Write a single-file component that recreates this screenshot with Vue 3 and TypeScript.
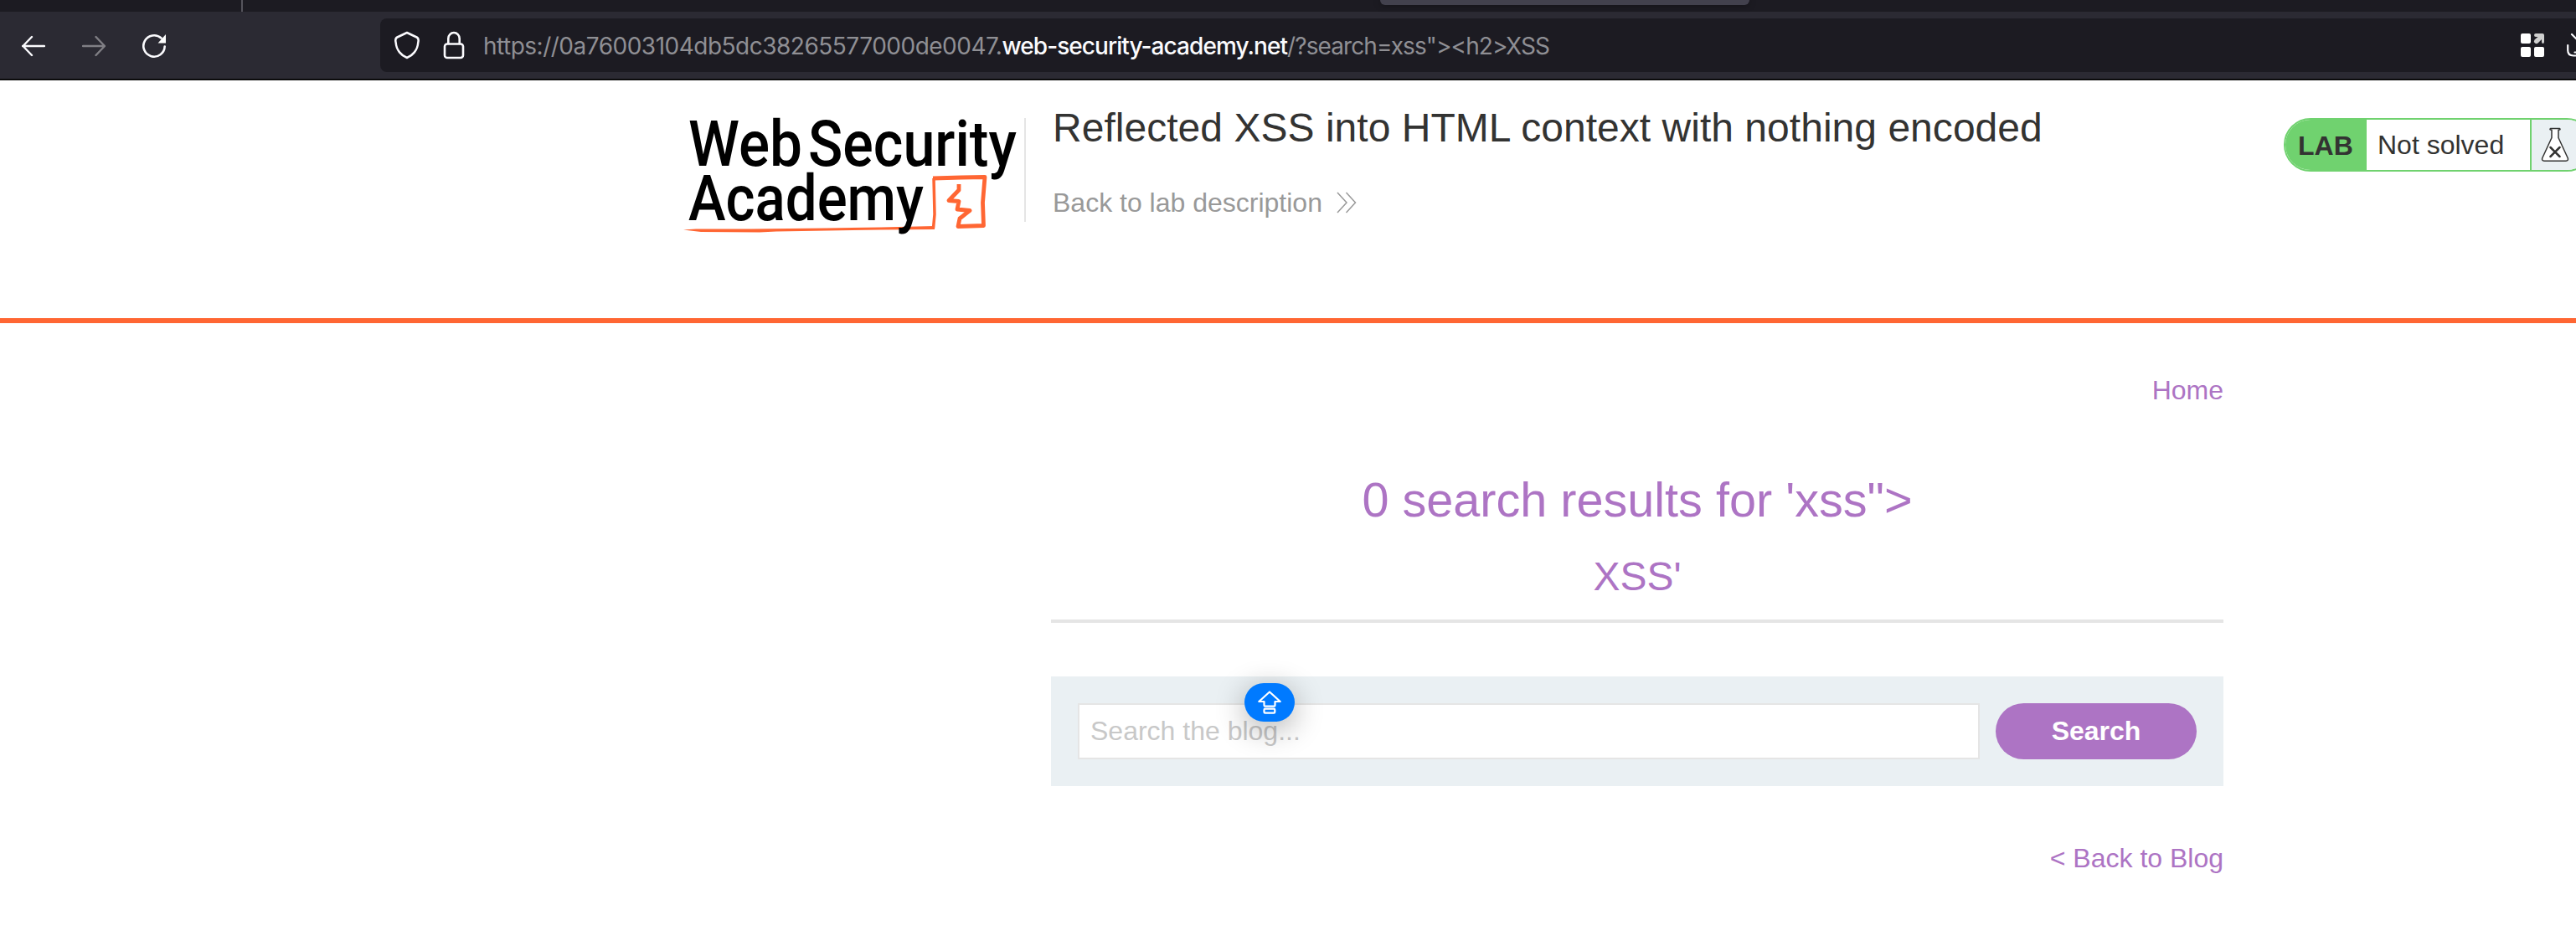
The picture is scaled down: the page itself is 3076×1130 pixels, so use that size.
<script setup lang="ts">
import { ref } from 'vue'

const url = {
  prefix: 'https://0a76003104db5dc38265577000de0047.',
  domain: 'web-security-academy.net',
  path: '/?search=xss"><h2>XSS',
}
const heading = '0 search results for \'xss">'
const subheading = "XSS'"
const query = ref('')
</script>

<template>
  <div class="page">
    <div class="tabs">
      <div class="tab-separator"></div>
      <div class="tab-active"></div>
    </div>
    <div class="toolbar">
      <div class="nav-icons">
        <svg width="28" height="32" viewBox="0 0 28 32" class="stroke">
          <path d="M1 16H27M12 5L1.500 16L12 27" />
        </svg>
        <svg width="28" height="32" viewBox="0 0 28 32" class="stroke dim">
          <path d="M1 16H27M16.500 5L27 16L16.500 27" />
        </svg>
        <svg width="30" height="32" viewBox="0 0 30 32" class="stroke">
          <path d="M26.700 16.500A12.700 12.700 0 1 1 22.500 6.500" stroke-width="2.600" />
          <path d="M28 2V12.500H18.600Z" fill="#fff" stroke="none" />
        </svg>
      </div>
      <div class="address">
        <svg class="stroke shield" width="30" height="34" viewBox="0 0 30 34">
          <path d="M15 2L27 7.500Q30 9 28.700 14C28 23 22 29.500 15 32C8 29.500 2 23 1.300 14Q0 9 3 7.500Z" transform="translate(.4 0) scale(.97 1)" stroke-width="2.600" />
        </svg>
        <svg class="stroke lock" width="26" height="34" viewBox="0 0 26 34">
          <rect x="2" y="15.500" width="22" height="16.500" rx="3" stroke-width="2.600" />
          <path d="M6.300 15V9A6.700 7 0 0 1 19.700 9V15" stroke-width="2.600" />
        </svg>
        <div class="url"><span class="prefix">{{ url.prefix }}</span><b>{{ url.domain }}</b><span class="path">{{ url.path }}</span></div>
        <div class="address-actions">
          <svg width="28" height="28" viewBox="0 0 28 28" fill="#fff">
            <rect width="12" height="12" rx="2" />
            <rect y="16" width="12" height="12" rx="2" />
            <rect x="16" y="16" width="12" height="12" rx="2" />
            <path fill="#cfcfcf" d="M18 0H26Q28 0 28 2V10Q28 12 26.500 12Q25 12 25 10V7L20.500 11.500Q18.500 13 17 11.500Q15 9.500 16.500 7.500L20.500 4H18Q16 4 16 2Q16 0 18 0Z" />
          </svg>
          <svg class="stroke" width="11" height="32" viewBox="0 0 11 32">
            <path d="M6 3L13 10M1.200 16V22Q1.200 28.500 8 28.500H12M9.500 24.500H12" stroke-width="2.200" />
          </svg>
        </div>
      </div>
    </div>

    <header class="lab-header">
      <svg class="logo" width="412" height="150" viewBox="0 0 412 150">
        <g fill="none" stroke="#ff6633" stroke-linejoin="round">
          <path fill="#ff6633" stroke="none" d="M-1 17L14 16L80 16L170 15L235 14L299 12.500L299 16.500L235 17L110 19L90 20L20 19.500Z" transform="translate(0 120.500)" />
          <path stroke-width="3.500" d="M297.500 135.500L299 119L298 76" />
          <path stroke-width="4.800" d="M297 76L331 75L359 74.500L356.500 105L357.500 132.500L327 133.500L329 124L341 114.500L326 113L328 103.500L316 102.500L328 90L328 83" />
        </g>
        <g class="logo-text">
          <text x="5" y="61.300" textLength="136" lengthAdjust="spacingAndGlyphs">Web</text>
          <text x="148" y="61.300" textLength="249" lengthAdjust="spacingAndGlyphs">Security</text>
          <text x="5" y="126.300" textLength="281" lengthAdjust="spacingAndGlyphs">Academy</text>
        </g>
      </svg>
      <div class="title-block">
        <h2>Reflected XSS into HTML context with nothing encoded</h2>
        <a class="back-lab">Back to lab description
          <svg width="24" height="26" viewBox="0 0 24 26" fill="none" stroke="#999" stroke-width="1.500">
            <path d="M1 1L12 13L1 25M11.500 1L22.500 13L11.500 25" />
          </svg>
        </a>
      </div>
      <div class="lab-status">
        <strong>LAB</strong>
        <span>Not solved</span>
        <div class="flask">
          <svg width="34" height="42" viewBox="0 0 34 42" stroke="#333332" fill="none">
            <path fill="#fff" stroke-width="1.500" stroke-linejoin="round" d="M11.500 1.500H22.500Q24 3.300 21 3.300V12.500L32.300 37Q33 40.200 30 40.200H4Q1 40.200 1.700 37L13 12.500V3.300Q10 3.300 11.500 1.500Z" />
            <path stroke-width="2.500" stroke-linecap="round" d="M11.500 24L22.500 35M22.500 24L11.500 35" />
          </svg>
        </div>
      </div>
    </header>

    <main>
      <nav><a>Home</a></nav>
      <section class="blog-header">
        <h1>{{ heading }}</h1>
        <h2>{{ subheading }}</h2>
      </section>
      <form class="search" @submit.prevent>
        <input v-model="query" type="text" placeholder="Search the blog..." />
        <button type="submit">Search</button>
        <div class="caps-badge">
          <svg width="30" height="30" viewBox="0 0 30 30" fill="none" stroke="#fff" stroke-width="2.200" stroke-linejoin="round">
            <path d="M15 2.500L27.700 14H21.500V18.500Q21.500 19.700 20.300 19.700H9.700Q8.500 19.700 8.500 18.500V14H2.300Z" />
            <rect x="8.500" y="22.700" width="12.800" height="5" rx="1.200" />
          </svg>
        </div>
      </form>
      <div class="back-blog"><a>&lt; Back to Blog</a></div>
    </main>
  </div>
</template>

<style>
body {
  background: #fff;
  overflow: hidden;
}
</style>

<style scoped>
* {
  box-sizing: border-box;
}
.page {
  width: 3076px;
  height: 1130px;
  overflow: hidden;
  font-family: "Liberation Sans", Arial, sans-serif;
  font-size: 32px;
  line-height: 36px;
  color: #333332;
}
svg {
  display: block;
  flex: none;
}
.tabs {
  display: flex;
  height: 14px;
  background: #1c1b22;
}
.tab-separator {
  width: 2px;
  margin-left: 288px;
  background: #55545c;
}
.tab-active {
  width: 441px;
  height: 6px;
  margin-left: 1358px;
  border-radius: 0 0 8px 8px;
  background: #42414d;
  box-shadow: 0 0 8px rgba(0, 0, 0, 0.4);
}
.toolbar {
  display: flex;
  align-items: center;
  height: 82px;
  background: #2b2a33;
  border-bottom: 2px solid #0c0c0d;
}
.nav-icons {
  display: flex;
  gap: 44px;
  width: 454px;
  padding: 2px 0 0 26px;
}
.stroke {
  fill: none;
  stroke: #fbfbfe;
  stroke-width: 2.4;
  stroke-linecap: round;
  stroke-linejoin: round;
}
.dim {
  stroke: #807f85;
}
.address {
  display: flex;
  align-items: center;
  flex: 1;
  height: 64px;
  overflow: hidden;
  background: #1c1b22;
  border-radius: 8px 0 0 8px;
}
.shield {
  margin-left: 17px;
}
.lock {
  margin-left: 28px;
}
.url {
  margin-left: 22px;
  padding-top: 2px;
  font-family: Inter, sans-serif;
  font-size: 28px;
  white-space: pre;
  color: #8f8f94;
}
.prefix {
  letter-spacing: -0.5px;
}
.url b {
  font-weight: 500;
  letter-spacing: -0.93px;
  color: #fbfbfe;
}
.path {
  letter-spacing: -0.9px;
}
.address-actions {
  display: flex;
  align-items: center;
  gap: 27px;
  margin-left: auto;
}
.lab-header {
  display: flex;
  align-items: flex-start;
  height: 290px;
  border-bottom: 6px solid #ff6633;
}
.logo {
  height: 150px;
  margin: 41px 0 0 817px;
  overflow: visible;
}
.logo-text {
  font-family: Roboto, sans-serif;
  font-size: 76.5px;
  font-weight: 500;
  fill: #000;
}
.title-block {
  position: relative;
  flex: none;
  width: 1470px;
  padding: 29px 0 0 28px;
}
.title-block::before {
  content: "";
  position: absolute;
  left: -6px;
  top: 45px;
  width: 2px;
  height: 124px;
  background: #e5e5e5;
}
h1,
h2 {
  margin: 0;
  font-weight: 400;
}
h2 {
  font-size: 48px;
  line-height: 56px;
}
.title-block h2 {
  letter-spacing: 0.03px;
}
.back-lab {
  display: flex;
  align-items: center;
  gap: 17px;
  margin-top: 43px;
  color: #999;
}
.lab-status {
  display: flex;
  flex: none;
  width: 370px;
  height: 64px;
  margin: 45px 0 0 28px;
  border: 2px solid #70d26f;
  border-radius: 32px;
  overflow: hidden;
  line-height: 60px;
  background: #fff;
}
.lab-status strong {
  width: 97px;
  padding: 1px 0 0 15px;
  background: #70d26f;
}
.lab-status span {
  width: 197px;
  padding-left: 13px;
  border-right: 2px solid #70d26f;
}
.flask {
  flex: 1;
  padding: 9px 0 0 11px;
  background: #eaf0f3;
}
main {
  width: 1400px;
  margin-left: 1255px;
  color: #ad74c4;
}
nav {
  padding-top: 62px;
  text-align: right;
}
.blog-header {
  height: 260px;
  padding-top: 81px;
  text-align: center;
  border-bottom: 4px solid #e5e5e5;
}
.blog-header h1 {
  font-size: 57.6px;
  line-height: 64px;
}
.blog-header h2 {
  margin-top: 32px;
}
.search {
  position: relative;
  display: flex;
  gap: 19px;
  height: 131px;
  margin-top: 64px;
  padding: 32px;
  background: #eaf0f3;
}
input {
  flex: 1;
  height: 67px;
  padding: 0 13px;
  border: 2px solid #e5e5e5;
  outline: none;
  background: #fff;
  font: 32px "Liberation Sans", Arial, sans-serif;
}
input::placeholder {
  color: #c8c8c8;
}
button {
  width: 240px;
  height: 67px;
  padding: 0;
  border: 0;
  border-radius: 34px;
  background: #ad74c4;
  color: #fff;
  font: bold 32px "Liberation Sans", Arial, sans-serif;
}
.caps-badge {
  position: absolute;
  left: 231px;
  top: 8px;
  display: flex;
  align-items: center;
  justify-content: center;
  width: 60px;
  height: 46px;
  border-radius: 23px;
  background: #007aff;
  box-shadow: 0 8px 36px rgba(0, 0, 0, 0.32);
}
.back-blog {
  margin-top: 68px;
  text-align: right;
}
</style>
